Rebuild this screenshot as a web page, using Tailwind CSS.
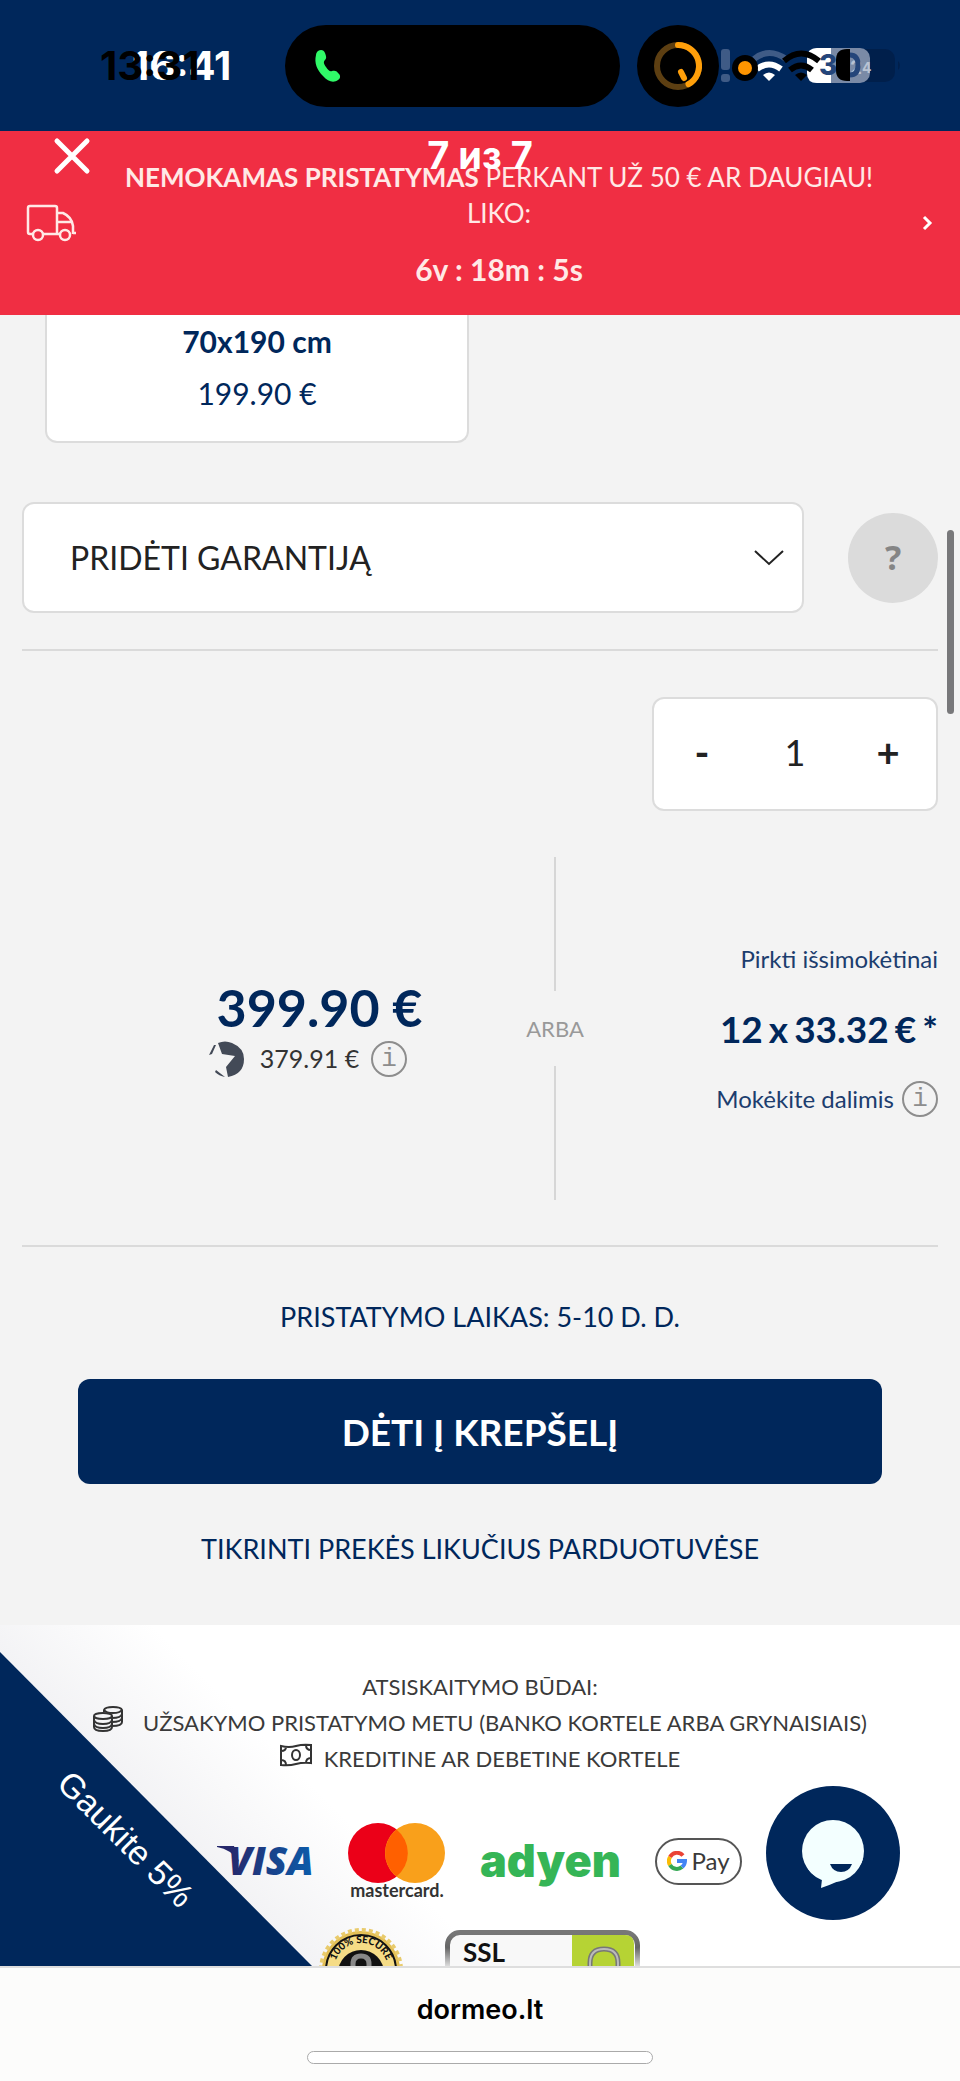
<!DOCTYPE html>
<html lang="lt">
<head>
<meta charset="utf-8">
<meta name="viewport" content="width=device-width, initial-scale=1">
<title>dormeo.lt</title>
<script src="https://cdn.jsdelivr.net/npm/@tailwindcss/browser@4"></script>
</head>
<body class="relative flex min-h-screen flex-col overflow-x-hidden bg-[#f3f3f3] font-['Lato','Noto_Sans',sans-serif] text-[#00275b]">

<!-- Status bar -->
<header class="relative flex h-[131px] items-center bg-[#00275b] font-['Inter',sans-serif]">
  <div class="grid w-[285px] shrink-0 pl-[100px] text-[40px] leading-[48px] font-bold">
    <span class="col-start-1 row-start-1 pl-8 text-white">16:41</span>
    <span class="col-start-1 row-start-1 text-black">13:31</span>
  </div>
  <div class="flex h-[82px] w-[335px] shrink-0 items-center rounded-full bg-black pl-7">
    <svg class="h-9 w-8" viewBox="0 0 32 36" fill="#30f968"><path d="M5 3C8 1 11 2 12 5c1 3 2 5 0 7-2 2-1 4 1 7 2 3 4 5 6 4 3-1 5 0 7 3 2 2 1 5-1 6-4 3-10 2-15-4C4 22 1 15 3 7c0-2 1-3 2-4z"/></svg>
  </div>
  <svg class="ml-[17px] h-[82px] w-[82px] shrink-0" viewBox="0 0 82 82" fill="none">
    <circle cx="41" cy="41" r="41" fill="#000"/>
    <circle cx="41" cy="41" r="21" stroke="#5d3f12" stroke-width="6"/>
    <path d="M41 20A21 21 0 0 1 51.500 59.200" stroke="#ff9f0a" stroke-width="6" stroke-linecap="round"/>
    <path d="M44 47l3 6" stroke="#ff9f0a" stroke-width="6" stroke-linecap="round"/>
  </svg>
  <svg class="h-[40px] w-[190px] shrink-0" viewBox="719 45 190 40" fill="none">
    <rect x="721" y="48" width="9" height="21" rx="3" fill="#3f5b86"/>
    <rect x="721" y="73" width="9" height="8" rx="3" fill="#3f5b86"/>
    <path d="M754 58Q769 46 786 58" stroke="#3f5b86" stroke-width="6"/>
    <path d="M757 68Q769 59 781 68" stroke="#fff" stroke-width="6"/>
    <path d="M763 74Q769 69 775 74L769 80z" fill="#fff"/>
    <rect x="850" y="48" width="45" height="33" rx="10" fill="#001f4b"/>
    <path d="M898 60q4 4 0 9z" fill="#001f4b"/>
    <rect x="807" y="47" width="63" height="35" rx="10" fill="#7a8aa6"/>
    <path d="M831 47H817q-10 0-10 10v15q0 10 10 10h14z" fill="#fff"/>
    <text x="819" y="74" font-family="Inter" font-weight="800" font-size="28" fill="#24457a">3</text>
    <text x="850" y="73" font-family="Inter" font-weight="700" font-size="19" fill="#b9c3d3">2</text>
    <text x="862" y="72" font-family="Inter" font-weight="700" font-size="14" fill="#b9c3d3">4</text>
    <path d="M850 48h-3q-11 0-11 11v10q0 11 11 11h3z" fill="#000"/>
    <path d="M850 54q8 0 8 10t-8 10" stroke="#24457a" stroke-width="5"/>
    <path d="M784 60Q801 45 819 60" stroke="#000" stroke-width="6"/>
    <path d="M790 69Q801 60 812 69" stroke="#000" stroke-width="6"/>
    <path d="M795 74Q801 69 807 74L801 80z" fill="#000"/>
    <circle cx="745" cy="67" r="13" fill="#000"/>
    <circle cx="745" cy="67" r="7" fill="#ff9500"/>
  </svg>
</header>

<!-- Free delivery banner, with the viewer's controls laid over it -->
<section class="relative flex items-center bg-[#f02e43] px-[26px] py-7 leading-9 text-[#ffe9e6]">
  <svg class="h-[38px] w-[50px] shrink-0" viewBox="0 0 50 38" fill="none" stroke="#ffe9e6" stroke-width="2.500" stroke-linejoin="round">
    <path d="M7 30H4q-2 0-2-2V4q0-2 2-2h25q2 0 2 2v26H17M31 9h6q9 4 10 13v8M31 18h14M47 29h3M31 30h3"/>
    <circle cx="12" cy="31" r="5"/><circle cx="39" cy="31" r="5"/>
  </svg>
  <div class="flex flex-1 flex-col gap-5 text-center">
    <p class="text-[26px] leading-9"><b>NEMOKAMAS PRISTATYMAS</b> PERKANT UŽ 50 € AR DAUGIAU!<br>LIKO:</p>
    <p class="text-[30px] leading-9 font-bold">6v : 18m : 5s</p>
  </div>
  <a href="#delivery" aria-label="Plačiau"><svg class="h-4 w-3" viewBox="0 0 12 16" fill="none" stroke="#fff" stroke-width="3"><path d="M2 2l6 6-6 6"/></svg></a>
  <button type="button" aria-label="Uždaryti" class="absolute top-[6px] left-[53px]"><svg class="h-[38px] w-[38px]" viewBox="0 0 38 38" stroke="#fff" stroke-width="5" stroke-linecap="round"><path d="M4 4l30 30M34 4L4 34"/></svg></button>
  <p class="absolute inset-x-0 top-0 text-center font-['Inter',sans-serif] text-[38px] leading-[48px] font-bold text-white">7 из 7</p>
</section>

<main class="flex flex-col px-[22px]">
  <div class="ml-[23px] w-[424px] rounded-b-xl border-2 border-t-0 border-[#dcdcdc] bg-white pb-[22px] text-center text-[30px] leading-[52px]">
    <p class="font-bold">70x190 cm</p>
    <p>199.90 €</p>
  </div>

  <div class="mt-[59px] flex items-center justify-between">
    <div class="relative w-[782px]">
      <select aria-label="Pridėti garantiją" class="block h-[111px] w-full appearance-none rounded-xl border-2 border-[#dcdcdc] bg-white pl-[46px] text-[32px] text-[#222]"><option>PRIDĖTI GARANTIJĄ</option></select>
      <svg class="pointer-events-none absolute top-[47px] right-5 h-[18px] w-[30px]" viewBox="0 0 30 18" fill="none" stroke="#222" stroke-width="2"><path d="M1 2l14 13L29 2"/></svg>
    </div>
    <button type="button" aria-label="Pagalba" class="h-[90px] w-[90px] rounded-full bg-[#dbdbdb] font-['Noto_Sans',sans-serif] text-[34px] font-bold text-[#858585]">?</button>
  </div>

  <hr class="mt-9 border-t-2 border-[#dadada]">

  <div class="mt-[46px] flex h-[114px] w-[286px] items-center justify-between self-end rounded-xl border-2 border-[#dcdcdc] bg-white px-8 pb-1 text-[36px] text-[#222]">
    <button type="button" aria-label="Mažiau" class="w-8 text-[40px] leading-[52px] font-bold">-</button>
    <input aria-label="Kiekis" value="1" class="w-16 bg-transparent text-center">
    <button type="button" aria-label="Daugiau" class="w-8 text-[40px] leading-[52px] font-bold">+</button>
  </div>

  <div class="mt-[46px] flex h-[343px]">
    <div class="flex flex-1 flex-col items-center justify-center gap-1 pb-1 pl-[68px]">
      <p class="pl-6 text-[52px] leading-[60px] font-bold">399.90 €</p>
      <div class="flex h-9 items-center text-[25px] text-[#333]">
        <svg class="h-9 w-9" viewBox="0 0 36 36" fill="#434a57"><path d="M10 2Q17-1 24 2 36 7 36 18 36 33 20 36L18 26 27 15 14 13z"/><path d="M6 4L1 14l3-1 4-9zM7 31q4 4 10 5l-9-7z"/></svg>
        <span class="pl-4">379.91 €</span>
        <button type="button" aria-label="Informacija apie kainą" class="ml-3 h-9 w-9 rounded-full border-2 border-[#8d8d8d] font-['Liberation_Mono',monospace] text-[26px] leading-8 text-[#8d8d8d]">i</button>
      </div>
    </div>
    <div class="flex w-[60px] flex-col items-center justify-between text-[22px] leading-9 text-[#999]">
      <span class="h-[134px] w-[2px] bg-[#d6d6d6]"></span>
      <span>ARBA</span>
      <span class="h-[134px] w-[2px] bg-[#d6d6d6]"></span>
    </div>
    <div class="flex w-[353px] flex-col items-end justify-center gap-7 text-[24px] leading-9 text-[#1c3d6e]">
      <p>Pirkti išsimokėtinai</p>
      <p class="flex gap-[6px] text-[37px] leading-[48px] font-bold text-[#00275b]"><span>12</span> <span>x</span> <span>33.32</span> <span>€</span> <span>*</span></p>
      <div class="flex items-center gap-2"><span>Mokėkite dalimis</span>
        <button type="button" aria-label="Informacija apie mokėjimą dalimis" class="h-9 w-9 rounded-full border-2 border-[#8d8d8d] font-['Liberation_Mono',monospace] text-[26px] leading-8 text-[#8d8d8d]">i</button>
      </div>
    </div>
  </div>

  <hr class="mt-[45px] border-t-2 border-[#dadada]">

  <div class="flex flex-col items-center px-14 pt-[52px] pb-[58px] text-[27px] leading-9">
    <p id="delivery">PRISTATYMO LAIKAS: 5-10 D. D.</p>
    <button type="button" class="mt-11 h-[105px] w-full rounded-xl bg-[#00275b] text-[37px] font-bold text-white">DĖTI Į KREPŠELĮ</button>
    <a href="#stock" class="mt-[47px]">TIKRINTI PREKĖS LIKUČIUS PARDUOTUVĖSE</a>
  </div>
</main>

<!-- Payment methods -->
<section class="relative h-[341px] overflow-hidden bg-white leading-9 text-[#3a3a3a]">
  <svg class="absolute bottom-0 left-0 h-[341px] w-[560px]" viewBox="0 0 560 341">
    <defs><linearGradient id="shade" gradientUnits="userSpaceOnUse" x1="156" y1="184" x2="246" y2="94"><stop offset="0" stop-color="#f3f3f5"/><stop offset="1" stop-color="#fff"/></linearGradient></defs>
    <path d="M0 0H360L560 200V341H0z" fill="url(#shade)"/>
  </svg>
  <div class="relative flex flex-col items-center pt-11 text-[22px] leading-9">
    <p>ATSISKAITYMO BŪDAI:</p>
    <p class="flex items-center gap-5"><svg class="mb-2 h-[27px] w-[30px]" viewBox="0 0 30 27" fill="none" stroke="#333" stroke-width="2"><path d="M1 10v11q0 4 9 4t9-4V10M1 14q1 4 9 4t9-4M1 18q1 4 9 4t9-4M11 6V4q1-3 9-3t9 3v12q0 4-10 4M29 8q-1 4-10 4M29 12q-1 4-10 4"/><ellipse cx="10" cy="10" rx="9" ry="3"/><path d="M11 4q2 3 9 3t9-3"/></svg>UŽSAKYMO PRISTATYMO METU (BANKO KORTELE ARBA GRYNAISIAIS)</p>
    <p class="flex items-center gap-3"><svg class="mb-2 h-[24px] w-[32px]" viewBox="0 0 32 24" fill="none" stroke="#333" stroke-width="2"><path d="M1 3q8 2 15 0t15-1v18q-8-1-15 1t-15 1zM1 8q5 0 5-4M31 7q-5 0-5-5M1 17q5 0 5 5M31 15q-5 0-5 5"/><ellipse cx="16" cy="12" rx="4" ry="5"/></svg>KREDITINE AR DEBETINE KORTELE</p>
  </div>
  <div class="relative mt-11 flex h-[80px] items-center pl-[216px]">
    <svg class="h-[60px] w-[108px]" viewBox="0 -10 108 60" role="img" aria-label="Visa">
      <defs><linearGradient id="visa"><stop offset="0" stop-color="#26286b"/><stop offset="1" stop-color="#0b5cab"/></linearGradient></defs>
      <path d="M1 5h17l5 16Q15 8 1 6z" fill="#26286b"/>
      <text x="12" y="34" font-family="Open Sans" font-weight="800" font-style="italic" font-size="39" fill="url(#visa)">VISA</text>
    </svg>
    <svg class="ml-6 h-[80px] w-[98px]" viewBox="0 0 98 80" role="img" aria-label="Mastercard">
      <circle cx="30" cy="32" r="30" fill="#eb0018"/><circle cx="67" cy="32" r="30" fill="#f9a01b"/>
      <path d="M48.500 8.500a30 30 0 0 1 0 47 30 30 0 0 1 0-47z" fill="#ff6000"/>
      <text x="49" y="76" text-anchor="middle" font-family="Lato" font-weight="700" font-size="18" fill="#333">mastercard.</text>
    </svg>
    <span class="ml-[34px] w-[141px] font-['Inter',sans-serif] text-[45px] leading-[60px] font-black text-[#35b556]">adyen</span>
    <div class="ml-[34px] flex h-[47px] w-[87px] items-center justify-center gap-1 rounded-full border-2 border-[#555]">
      <svg class="h-5 w-5" viewBox="0 0 20 20" fill="none" stroke-width="4"><path d="M16 4.500A8 8 0 0 0 3 6" stroke="#ea4335"/><path d="M3 6a8 8 0 0 0 0 8" stroke="#fbbc05"/><path d="M3 14a8 8 0 0 0 12 2" stroke="#34a853"/><path d="M10 10h8a8 8 0 0 1-3 6" stroke="#4285f4"/></svg>
      <span class="font-['Lato',sans-serif] text-[24px]">Pay</span>
    </div>
  </div>
  <div class="relative mt-[26px] flex items-start pl-[318px]">
    <svg class="h-[86px] w-[86px]" viewBox="0 0 86 86" role="img" aria-label="100% secure">
      <defs><radialGradient id="gold"><stop offset="0.700" stop-color="#f9e9a0"/><stop offset="1" stop-color="#dfb747"/></radialGradient><path id="arc" d="M16 43a27 27 0 0 1 54 0"/></defs>
      <circle cx="43" cy="43" r="39" fill="url(#gold)"/><circle cx="43" cy="43" r="40" fill="none" stroke="#e9cb6c" stroke-width="4" stroke-dasharray="4 3"/>
      <circle cx="43" cy="43" r="35" fill="#f5dc86" stroke="#111" stroke-width="2"/>
      <circle cx="43" cy="46" r="23" fill="#111"/><path d="M35 46v-9q0-8 8-8t8 8v9" stroke="#888" stroke-width="5" fill="none"/>
      <text font-family="Lato" font-weight="900" font-size="10" fill="#111"><textPath href="#arc" startOffset="50%" text-anchor="middle">100% SECURE</textPath></text>
    </svg>
    <svg class="mt-[3px] ml-[41px] h-[80px] w-[196px]" viewBox="0 0 196 80" role="img" aria-label="SSL">
      <defs><linearGradient id="metal" x2="0" y2="1"><stop offset="0" stop-color="#777"/><stop offset="0.200" stop-color="#666"/><stop offset="0.450" stop-color="#ddd"/><stop offset="1" stop-color="#888"/></linearGradient></defs>
      <rect x="1" y="1" width="193" height="78" rx="14" fill="#fff" stroke="url(#metal)" stroke-width="2"/>
      <rect x="3" y="3" width="189" height="74" rx="12" fill="#f8f8f8" stroke="url(#metal)" stroke-width="4"/>
      <path d="M127 5h53q9 0 9 9v62h-62z" fill="#b6d334"/>
      <path d="M145 40V33q0-14 14-14t14 14v7" fill="none" stroke="#777" stroke-width="5"/><path d="M145 40V33q0-14 14-14t14 14v7" fill="none" stroke="#bbb" stroke-width="2"/>
      <text x="18" y="32" font-family="Lato" font-weight="700" font-size="26" fill="#111">SSL</text>
    </svg>
  </div>

  <!-- Corner promotion ribbon -->
  <a href="#promo" class="absolute bottom-0 left-0 h-[314px] w-[312px] bg-[#00275b] [clip-path:polygon(0_0,100%_100%,0_100%)]">
    <span class="absolute top-[167px] left-[28px] w-[196px] rotate-45 text-center font-['Liberation_Sans',Arial,sans-serif] text-[34px] leading-10 text-white">Gaukite 5%</span>
  </a>
  <button type="button" aria-label="Pokalbis" class="absolute top-[161px] right-[60px] h-[134px] w-[134px] rounded-full bg-[#00275b]">
    <svg viewBox="0 0 134 134"><circle cx="67" cy="65" r="31" fill="#f3ffff"/><path d="M42 83q5 7 14 10l-1 9q20-7 31-14 8-6 11-15z" fill="#f3ffff"/><path d="M64 78h22q-3 8-11 8t-11-8z" fill="#00275b"/></svg>
  </button>
</section>

<!-- Browser bar -->
<footer class="flex flex-1 flex-col items-center border-t-2 border-[#dedede] bg-[#fcfcfb] pt-6 pb-4 font-['Inter',sans-serif] text-[27px] leading-9 font-semibold text-black">
  <p>dormeo.lt</p>
  <div class="mt-[23px] h-[13px] w-[346px] rounded-full border border-[#aaa] bg-white"></div>
</footer>

<div class="absolute top-[530px] right-[6px] h-[184px] w-[7px] rounded-full bg-[#78787a]"></div>
</body>
</html>
